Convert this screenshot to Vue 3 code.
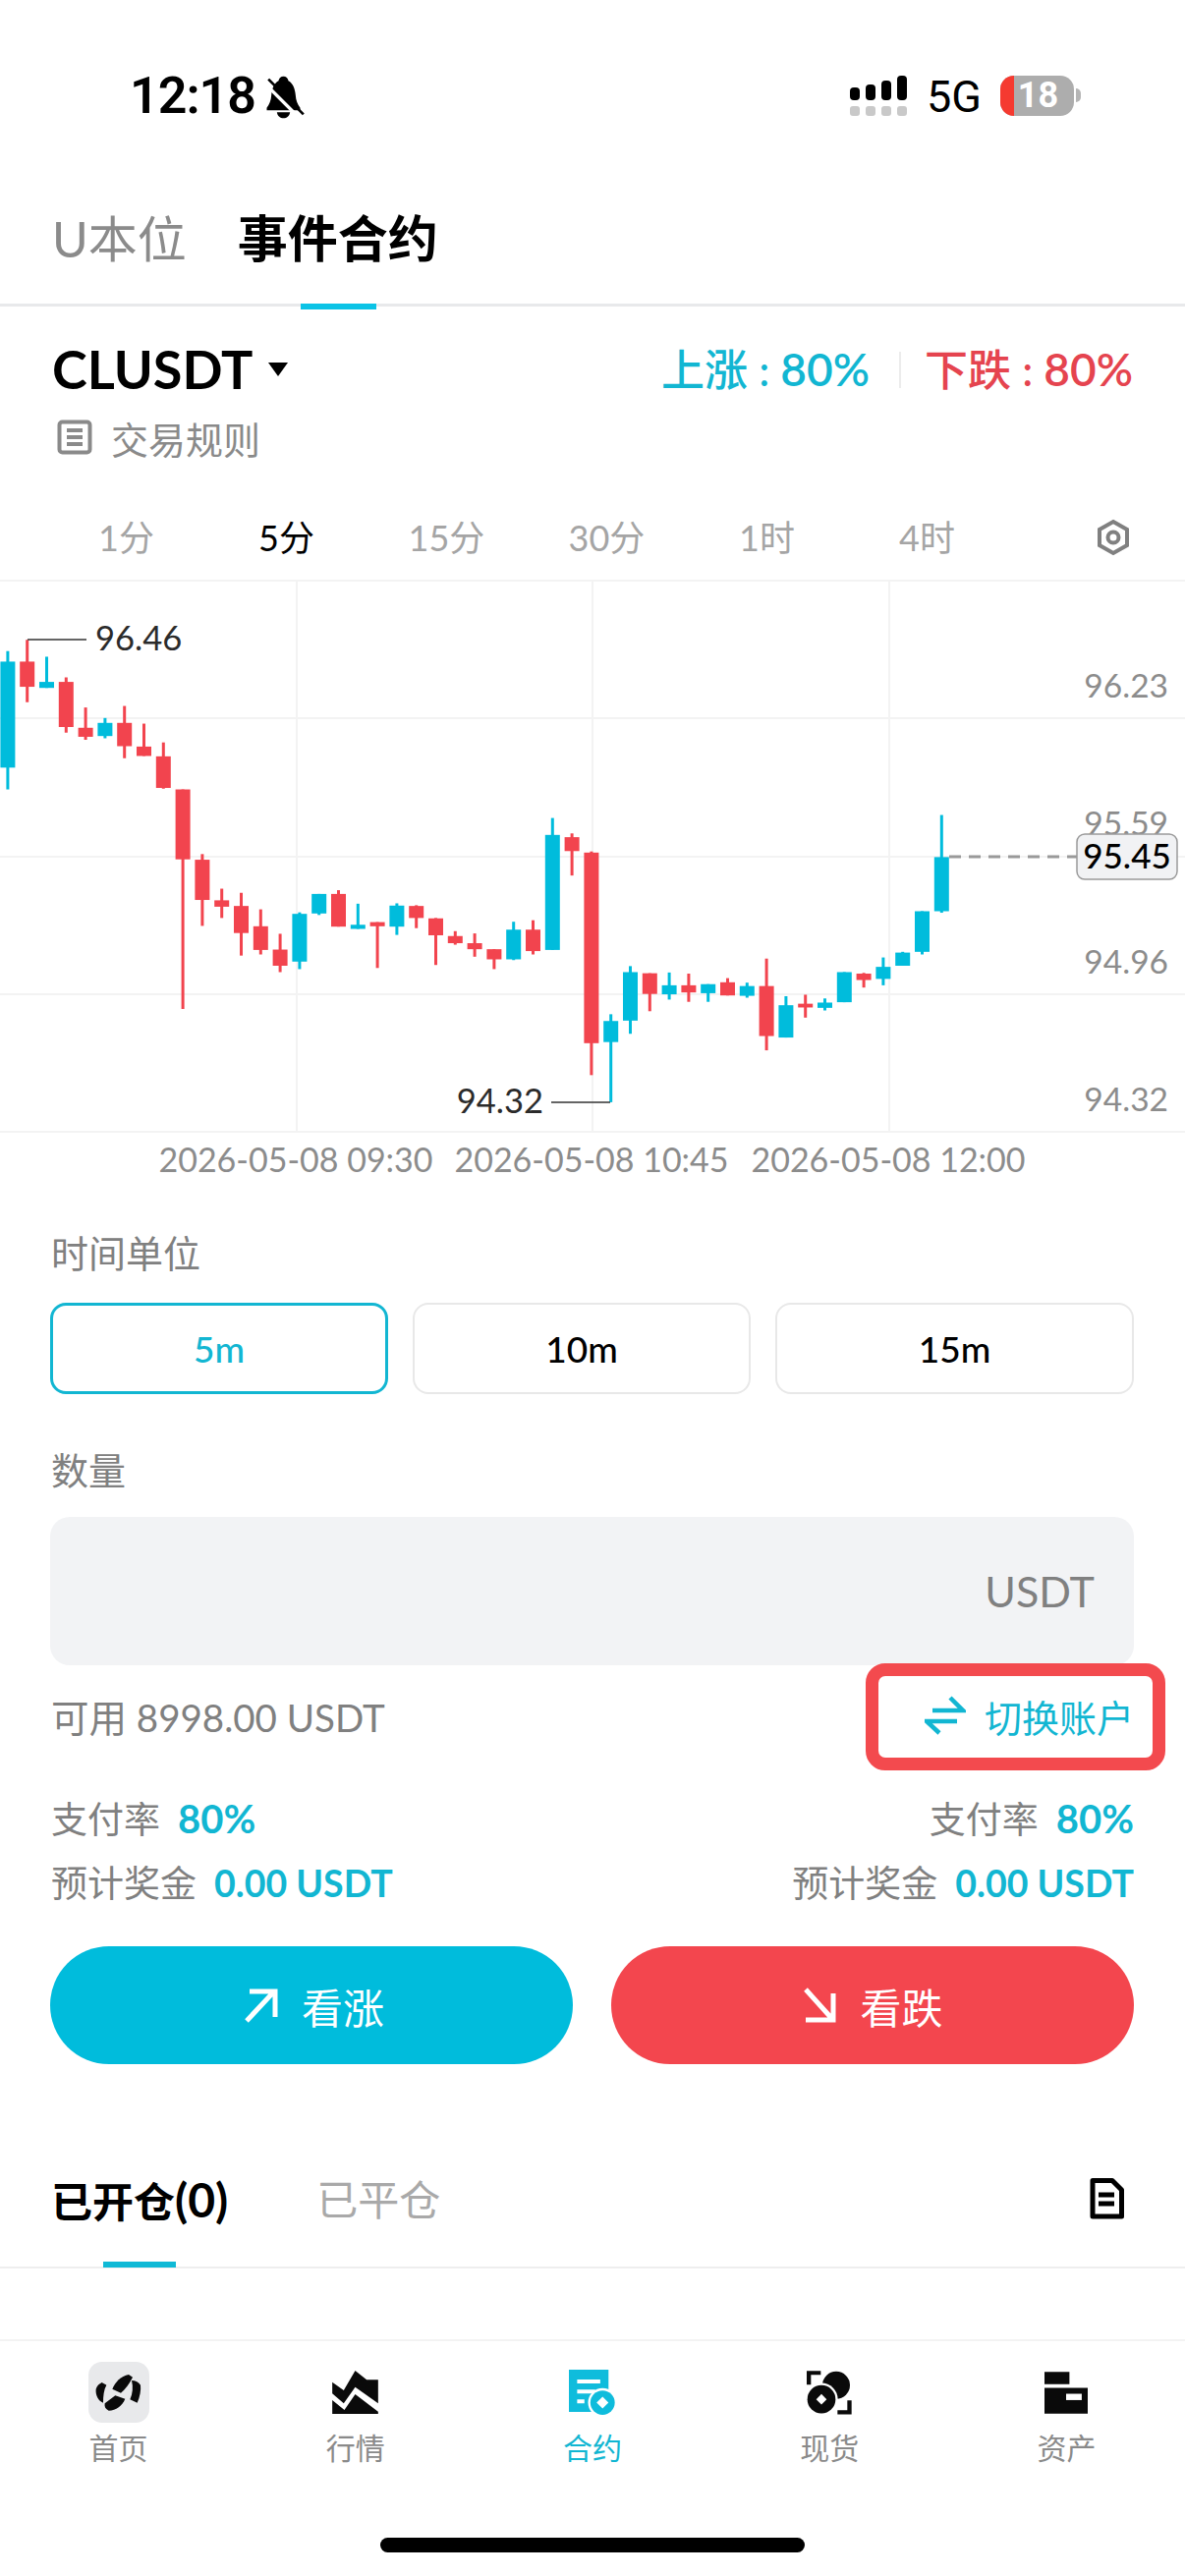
<template>
  <div class="page">
    <!-- status bar -->
    <div class="status">
      <div class="status-left">
        <span class="clock">12:18</span>
        <svg class="bell" viewBox="450 15 125 135">
          <path d="M505 20c-8 0-14 6-15 14-14 8-20 24-22 44-1 16-6 28-14 38v8h102v-8c-8-10-13-22-14-38-2-20-8-36-22-44-1-8-7-14-15-14z" />
          <path d="M485 130h40c-2 12-10 18-20 18s-18-6-20-18z" />
          <path class="bell-gap" d="M448 42l105 105" />
          <path class="bell-slash" d="M459 29l107 107" />
        </svg>
      </div>
      <div class="status-right">
        <svg class="signal" viewBox="0 0 58 41">
          <rect x="0" y="12" width="10" height="13" rx="4" />
          <rect x="16" y="9" width="10" height="16" rx="4" />
          <rect x="32" y="5" width="10" height="20" rx="4" />
          <rect x="48" y="0" width="10" height="25" rx="4" />
          <rect class="signal-off" x="0" y="31" width="10" height="10" rx="3" />
          <rect class="signal-off" x="16" y="31" width="10" height="10" rx="3" />
          <rect class="signal-off" x="32" y="31" width="10" height="10" rx="3" />
          <rect class="signal-off" x="48" y="31" width="10" height="10" rx="3" />
        </svg>
        <span class="network">5G</span>
        <div class="battery"><span class="battery-low"></span><span class="battery-num">18</span></div>
        <i class="battery-nub"></i>
      </div>
    </div>

    <!-- top tabs -->
    <div class="top-tabs">
      <span class="top-tab">U本位</span>
      <span class="top-tab active">事件合约</span>
    </div>

    <!-- symbol -->
    <div class="symbol-row">
      <div class="symbol">CLUSDT<span class="caret"></span></div>
      <div class="rates">
        <span class="up">上涨 : <b>80%</b></span>
        <i class="rates-sep"></i>
        <span class="down">下跌 : <b>80%</b></span>
      </div>
    </div>
    <div class="rule-row">
      <svg class="rule-icon" viewBox="0 0 36 36">
        <rect x="2.5" y="2.5" width="31" height="31" rx="3" />
        <path d="M10 11h16M10 18h16M10 25h16" />
      </svg>
      <span>交易规则</span>
    </div>

    <!-- intervals -->
    <div class="intervals">
      <span v-for="item in intervals" :key="item" class="interval" :class="{ active: item === '5分' }">{{ item }}</span>
      <svg class="gear" viewBox="0 0 36 38">
        <path d="M18 3l14 8v16l-14 8-14-8V11z" />
        <circle cx="18" cy="19" r="5.5" />
      </svg>
    </div>

    <!-- chart -->
    <svg class="chart" viewBox="0 0 1206 612">
      <g class="grid">
        <line x1="0" x2="1206" y1="1" y2="1" />
        <line x1="0" x2="1206" y1="141" y2="141" />
        <line x1="0" x2="1206" y1="282" y2="282" />
        <line x1="0" x2="1206" y1="422" y2="422" />
        <line x1="0" x2="1206" y1="562" y2="562" />
        <line x1="302" x2="302" y1="0" y2="562" />
        <line x1="603" x2="603" y1="0" y2="562" />
        <line x1="905" x2="905" y1="0" y2="562" />
      </g>
      <g v-for="c in bars" :key="c.x" :class="c.up ? 'bar-up' : 'bar-down'">
        <rect :x="c.x - 1.5" :y="c.high" width="3" :height="c.low - c.high" />
        <rect :x="c.x - 7.5" :y="c.top" width="15" :height="c.bottom - c.top" />
      </g>
      <text v-for="p in prices" :key="p.label" class="axis" x="1189" :y="p.y" text-anchor="end">{{ p.label }}</text>
      <text v-for="t in times" :key="t.x" class="axis time" :x="t.x" y="603" text-anchor="middle">{{ t.label }}</text>

      <path class="mark-line" d="M28 61H88M561 532H621" />
      <text class="mark" x="97" y="72">96.46</text>
      <text class="mark" x="553" y="543" text-anchor="end">94.32</text>

      <line class="last-line" x1="966" x2="1096" y1="282" y2="282" />
      <rect class="last-box" x="1096" y="259" width="102" height="46" rx="8" />
      <text class="last-text" x="1147" y="294" text-anchor="middle">95.45</text>
    </svg>

    <!-- order form -->
    <div class="form">
      <div class="field-label first">时间单位</div>
      <div class="durations">
        <div class="duration active">5m</div>
        <div class="duration">10m</div>
        <div class="duration">15m</div>
      </div>
      <div class="field-label second">数量</div>
      <div class="amount">USDT</div>

      <div class="avail-row">
        <span>可用 8998.00 USDT</span>
        <div class="switch">
          <svg class="switch-icon" viewBox="0 0 42 40">
            <path d="M8 15h31L26 2M33 26H2l13 12" />
          </svg>
          <span>切换账户</span>
        </div>
        <div class="highlight"></div>
      </div>

      <div class="payout pay-rate">
        <div>支付率<b>80%</b></div>
        <div>支付率<b>80%</b></div>
      </div>
      <div class="payout pay-bonus">
        <div>预计奖金<b>0.00 USDT</b></div>
        <div>预计奖金<b>0.00 USDT</b></div>
      </div>

      <div class="actions">
        <div class="action rise">
          <svg viewBox="0 0 36 36"><path d="M3 34L31 4M6 4h26v26" /></svg>
          <span>看涨</span>
        </div>
        <div class="action fall">
          <svg viewBox="0 0 36 36"><path d="M4 2l27 30M4 33h28V6" /></svg>
          <span>看跌</span>
        </div>
      </div>
    </div>

    <!-- positions -->
    <div class="positions">
      <span class="pos-tab active">已开仓<em>(0)</em></span>
      <span class="pos-tab">已平仓</span>
      <svg class="pos-doc" viewBox="0 0 36 42">
        <path d="M4 2.5h20l9.500 9.500v27h-29.500z" />
        <path d="M10 17h16M10 26h16" />
      </svg>
    </div>

    <!-- bottom nav -->
    <div class="nav">
      <div class="nav-items">
        <div class="nav-item">
          <div class="nav-icon home">
            <svg viewBox="30 25 186 186" width="62" height="62">
              <path d="M53 108c3-10 10-16 18-20 10 6 14 8 14 8-8 14-10 34-10 54-14-6-24-22-22-42z" />
              <path d="M103 108c8-20 26-40 50-44l12 8c-10 20-22 36-36 48z" />
              <path d="M162 82c12 0 22 6 27 14 2 16-2 36-10 54l-22-10c8-18 10-38 5-58z" />
              <path d="M80 152l32-24 30 10c-8 20-28 36-50 36-10-4-14-12-12-22z" />
            </svg>
          </div>
          <span>首页</span>
        </div>
        <div class="nav-item">
          <div class="nav-icon">
            <svg viewBox="775 50 140 132" width="47" height="44">
              <path d="M775 85l35 25 35-60 35 28h35v72l-70-50-35 50-35-30z" />
              <path d="M775 140l37 30 33-48 70 53v7h-140z" />
            </svg>
          </div>
          <span>行情</span>
        </div>
        <div class="nav-item active">
          <div class="nav-icon">
            <svg viewBox="35 40 140 140" width="47" height="47">
              <rect x="35" y="40" width="120" height="128" />
              <path class="cut" d="M60 70h70v12h-70zM60 100h55v12h-55zM60 130h22v12h-22z" />
              <circle class="cut" cx="137" cy="140" r="44" />
              <circle cx="137" cy="140" r="37" />
              <path class="cut" d="M137 122l18 18-18 18-18-18z" />
            </svg>
          </div>
          <span>合约</span>
        </div>
        <div class="nav-item">
          <div class="nav-icon">
            <svg viewBox="755 38 138 134" width="46" height="45">
              <path d="M755 38h43v12h-30v30h-13zM892 128v43h-43v-13h30v-30z" />
              <circle cx="845" cy="82" r="42" />
              <circle class="cut" cx="800" cy="125" r="50" />
              <circle cx="800" cy="125" r="43" />
              <path class="cut" d="M800 109l16 16-16 16-16-16z" />
            </svg>
          </div>
          <span>现货</span>
        </div>
        <div class="nav-item">
          <div class="nav-icon">
            <svg viewBox="71 608 130 126" width="44" height="43">
              <path d="M71 608h75v37h-75zM71 656h130v78h-130z" />
              <path class="cut" d="M136 674h47v19h-47z" />
            </svg>
          </div>
          <span>资产</span>
        </div>
      </div>
      <div class="home-bar"></div>
    </div>
  </div>
</template>

<script setup>
const intervals = ['1分', '5分', '15分', '30分', '1时', '4时']

// y values were read off a 1568 tall crop of the 600px chart
const raw = [
  [1, 190, 218, 500, 558], [0, 160, 218, 285, 326], [1, 205, 272, 288, 288], [0, 260, 272, 392, 407],
  [0, 340, 394, 418, 426], [1, 368, 381, 416, 422], [0, 336, 381, 443, 475], [0, 383, 444, 469, 469],
  [0, 433, 470, 554, 556], [0, 558, 558, 744, 1142], [0, 730, 745, 852, 921], [0, 822, 853, 870, 900],
  [0, 833, 868, 940, 1000], [0, 877, 922, 985, 997], [0, 942, 984, 1027, 1044], [1, 885, 889, 1016, 1036],
  [1, 836, 836, 888, 892], [0, 826, 836, 923, 923], [1, 862, 918, 929, 929], [0, 911, 911, 922, 1033],
  [1, 861, 867, 923, 945], [0, 866, 868, 900, 927], [0, 900, 901, 946, 1025], [0, 935, 948, 967, 971],
  [0, 941, 967, 983, 1003], [0, 983, 983, 1010, 1036], [1, 910, 931, 1010, 1012], [0, 906, 931, 988, 997],
  [1, 634, 679, 985, 985], [0, 675, 685, 722, 787], [0, 723, 726, 1233, 1318], [1, 1156, 1174, 1230, 1390],
  [1, 1028, 1044, 1173, 1208], [0, 1047, 1047, 1102, 1148], [1, 1045, 1079, 1103, 1117], [0, 1048, 1079, 1098, 1123],
  [1, 1076, 1076, 1100, 1123], [0, 1060, 1071, 1106, 1106], [1, 1072, 1081, 1107, 1112], [0, 1008, 1081, 1214, 1252],
  [1, 1108, 1132, 1218, 1218], [0, 1104, 1128, 1138, 1165], [1, 1114, 1125, 1139, 1146], [1, 1044, 1044, 1124, 1124],
  [0, 1046, 1048, 1065, 1085], [1, 1005, 1030, 1062, 1079], [1, 990, 992, 1027, 1027], [1, 882, 882, 990, 997],
  [1, 626, 738, 882, 886],
]
const sy = (v) => (v * 600) / 1568
const bars = raw.map((c, i) => ({
  x: 7.9 + i * 19.8,
  up: c[0] === 1,
  high: sy(c[1]),
  top: sy(c[2]),
  bottom: sy(c[3]),
  low: sy(c[4]),
}))

const prices = [
  { label: '96.23', y: 120 },
  { label: '95.59', y: 260 },
  { label: '94.96', y: 401 },
  { label: '94.32', y: 541 },
]
const times = [
  { label: '2026-05-08 09:30', x: 301 },
  { label: '2026-05-08 10:45', x: 602 },
  { label: '2026-05-08 12:00', x: 904 },
]
</script>

<style>
html, body {
  margin: 0;
  background: #fff;
}
</style>

<style scoped>
.page {
  width: 1206px;
  height: 2622px;
  display: flex;
  flex-direction: column;
  overflow: hidden;
  background: #fff;
  font-family: Lato, "Noto Sans CJK SC", sans-serif;
  color: #000;
}

/* status bar */
.status {
  height: 150px;
  box-sizing: border-box;
  padding: 75px 106px 0 132px;
  display: flex;
  justify-content: space-between;
  align-items: flex-start;
}
.status-left {
  display: flex;
  align-items: center;
  gap: 10px;
}
.clock {
  font-family: Roboto, sans-serif;
  font-size: 52px;
  font-weight: 600;
  line-height: 46px;
  letter-spacing: -1px;
}
.bell {
  width: 42px;
  height: 45px;
}
.bell-gap {
  stroke: #fff;
  stroke-width: 10;
}
.bell-slash {
  stroke: #000;
  stroke-width: 8;
}
.status-right {
  display: flex;
  align-items: flex-start;
  margin-top: 2px;
}
.signal {
  width: 58px;
  height: 41px;
  margin-right: 20px;
}
.signal-off {
  fill: #c9c9c9;
}
.network {
  font-family: Roboto, sans-serif;
  font-size: 45px;
  line-height: 44px;
  width: 75px;
}
.battery {
  position: relative;
  width: 75px;
  height: 41px;
  border-radius: 14px;
  background: #adadad;
  overflow: hidden;
  text-align: center;
}
.battery-low {
  position: absolute;
  left: 0;
  top: 0;
  bottom: 0;
  width: 14px;
  background: #f53a30;
}
.battery-num {
  position: relative;
  left: 1px;
  color: #fff;
  font-family: Roboto, sans-serif;
  font-weight: 700;
  font-size: 36px;
  line-height: 41px;
}
.battery-nub {
  width: 5px;
  height: 14px;
  margin: 13px 0 0 2px;
  border-radius: 0 6px 6px 0;
  background: #b5b5b5;
}

/* top tabs */
.top-tabs {
  height: 162px;
  box-sizing: border-box;
  padding: 63px 0 0 53px;
  display: flex;
  gap: 52px;
  border-bottom: 3px solid #e8e9eb;
}
.top-tab {
  position: relative;
  font-size: 50px;
  line-height: 60px;
  height: 99px;
  color: #8b8b8b;
}
.top-tab.active {
  font-size: 51px;
  font-weight: 700;
  color: #000;
}
.top-tab.active::after {
  content: "";
  position: absolute;
  left: 64px;
  width: 77px;
  bottom: -3px;
  height: 6px;
  background: #0bc3e6;
}

/* symbol */
.symbol-row {
  margin-top: 37px;
  padding: 0 53px;
  display: flex;
  justify-content: space-between;
  align-items: center;
  height: 54px;
}
.symbol {
  display: flex;
  align-items: center;
  font-size: 54px;
  font-weight: 700;
  line-height: 54px;
}
.caret {
  width: 0;
  height: 0;
  margin-left: 15px;
  border-left: 10px solid transparent;
  border-right: 10px solid transparent;
  border-top: 14px solid #000;
}
.rates {
  display: flex;
  align-items: center;
  font-size: 44px;
  font-weight: 500;
  line-height: 54px;
}
.rates b {
  font-weight: 600;
  font-size: 46px;
}
.rates-sep {
  width: 2px;
  height: 37px;
  margin: 0 24px 0 30px;
  background: #ececec;
}
.up {
  color: #12b6d2;
}
.down {
  color: #e5444f;
}
.rule-row {
  margin-top: 22px;
  padding-left: 58px;
  display: flex;
  align-items: center;
  gap: 19px;
  height: 40px;
  font-size: 38px;
  color: #8a8a8a;
}
.rule-icon {
  width: 36px;
  height: 36px;
  fill: none;
  stroke: #8a8a8a;
  stroke-width: 4;
}

/* intervals */
.intervals {
  margin-top: 62px;
  padding-left: 47px;
  height: 40px;
  display: flex;
  align-items: center;
}
.interval {
  width: 163px;
  text-align: center;
  font-size: 36px;
  line-height: 40px;
  color: #a5a5a5;
}
.interval.active {
  color: #000;
}
.gear {
  width: 36px;
  height: 38px;
  margin-left: 90px;
  fill: none;
  stroke: #808080;
  stroke-width: 4;
}

/* chart */
.chart {
  display: block;
  width: 1206px;
  height: 612px;
  margin-top: 23px;
}
.grid line {
  stroke: #f3f3f3;
  stroke-width: 2;
}
.bar-up rect {
  fill: #00bcdc;
}
.bar-down rect {
  fill: #f2444e;
}
.axis {
  font-size: 33.500px;
  fill: #8c8c8c;
}
.axis.time {
  font-size: 34px;
}
.mark {
  font-size: 34.500px;
  fill: #2b2b2b;
}
.mark-line {
  fill: none;
  stroke: #333;
  stroke-width: 1.500;
}
.last-line {
  stroke: #999;
  stroke-width: 3;
  stroke-dasharray: 12 8;
}
.last-box {
  fill: #f1f2f4;
  stroke: #9a9a9a;
  stroke-width: 1.500;
}
.last-text {
  font-size: 35px;
  font-weight: 500;
  fill: #000;
}

/* form */
.form {
  padding: 0 52px 0 51px;
  color: #808080;
}
.field-label {
  font-size: 38px;
  line-height: 40px;
  padding-left: 1px;
}
.field-label.first {
  margin-top: 53px;
}
.field-label.second {
  margin-top: 57px;
}
.durations {
  margin-top: 31px;
  display: grid;
  grid-template-columns: 344px 344px 1fr;
  gap: 25px;
}
.duration {
  height: 93px;
  box-sizing: border-box;
  border: 2px solid #e8e8e8;
  border-radius: 16px;
  display: flex;
  align-items: center;
  justify-content: center;
  font-size: 37px;
  font-weight: 500;
  color: #000;
}
.duration.active {
  border: 3px solid #12b6d2;
  color: #12b6d2;
}
.amount {
  margin-top: 28px;
  height: 151px;
  box-sizing: border-box;
  padding-right: 40px;
  border-radius: 20px;
  background: #f2f3f5;
  display: flex;
  align-items: center;
  justify-content: flex-end;
  font-size: 43px;
}
.avail-row {
  position: relative;
  margin-top: 31px;
  padding-left: 1px;
  height: 40px;
  display: flex;
  align-items: center;
  justify-content: space-between;
  font-size: 38.500px;
}
.switch {
  display: flex;
  align-items: center;
  gap: 19px;
  color: #12b6d2;
  font-size: 38px;
}
.switch-icon {
  width: 42px;
  height: 40px;
  fill: none;
  stroke: #12b6d2;
  stroke-width: 4.500;
}
.highlight {
  position: absolute;
  right: -32px;
  top: -33px;
  width: 305px;
  height: 109px;
  box-sizing: border-box;
  border: 13px solid #f34a4e;
  border-radius: 20px;
}
.payout {
  display: flex;
  justify-content: space-between;
  font-size: 37px;
  line-height: 40px;
  padding-left: 1px;
}
.payout b {
  margin-left: 18px;
  color: #12b6d2;
  font-weight: 700;
}
.pay-rate {
  margin-top: 65px;
}
.pay-rate b {
  font-size: 40px;
}
.pay-bonus {
  margin-top: 25px;
}
.pay-bonus b {
  font-size: 37.500px;
}
.actions {
  margin-top: 44px;
  display: grid;
  grid-template-columns: 1fr 1fr;
  gap: 39px;
}
.action {
  height: 120px;
  border-radius: 60px;
  display: flex;
  align-items: center;
  justify-content: center;
  gap: 23px;
  color: #fff;
  font-size: 42px;
}
.action svg {
  width: 36px;
  height: 36px;
  fill: none;
  stroke: #fff;
  stroke-width: 5;
}
.rise {
  background: #00bcdc;
  padding-left: 5px;
}
.fall {
  background: #f3464e;
}

/* positions */
.positions {
  margin-top: 113px;
  height: 93px;
  padding: 0 62px 0 52px;
  display: flex;
  align-items: flex-start;
  gap: 90px;
  border-bottom: 2px solid #eee;
}
.pos-tab {
  position: relative;
  font-size: 42px;
  line-height: 50px;
  color: #a9a9a9;
  height: 93px;
}
.pos-tab em {
  font-style: normal;
  font-size: 48px;
}
.pos-tab.active {
  color: #000;
  font-weight: 700;
}
.pos-tab.active::after {
  content: "";
  position: absolute;
  left: 53px;
  width: 74px;
  bottom: -1px;
  height: 6px;
  background: #0fb9d6;
}
.pos-doc {
  width: 36px;
  height: 42px;
  margin-left: auto;
  margin-top: 3px;
  fill: none;
  stroke: #000;
  stroke-width: 5;
  stroke-linejoin: round;
}

/* bottom nav */
.nav {
  margin-top: auto;
  border-top: 2px solid #f3f3f3;
  padding-top: 21px;
}
.nav-items {
  display: grid;
  grid-template-columns: repeat(5, 1fr);
}
.nav-item {
  display: flex;
  flex-direction: column;
  align-items: center;
  font-size: 30px;
  line-height: 36px;
  color: #8a8a8a;
}
.nav-item > span {
  margin-top: 7px;
}
.nav-item.active {
  color: #12b6d2;
}
.nav-icon {
  width: 62px;
  height: 62px;
  display: flex;
  align-items: center;
  justify-content: center;
  fill: #0a0a0a;
}
.nav-item.active .nav-icon {
  fill: #0fbcdc;
}
.nav-icon.home {
  background: #e8e9eb;
  border-radius: 14px;
}
.nav-icon .cut {
  fill: #fff;
}
.home-bar {
  width: 432px;
  height: 15px;
  margin: 74px auto 24px;
  border-radius: 8px;
  background: #000;
}
</style>
